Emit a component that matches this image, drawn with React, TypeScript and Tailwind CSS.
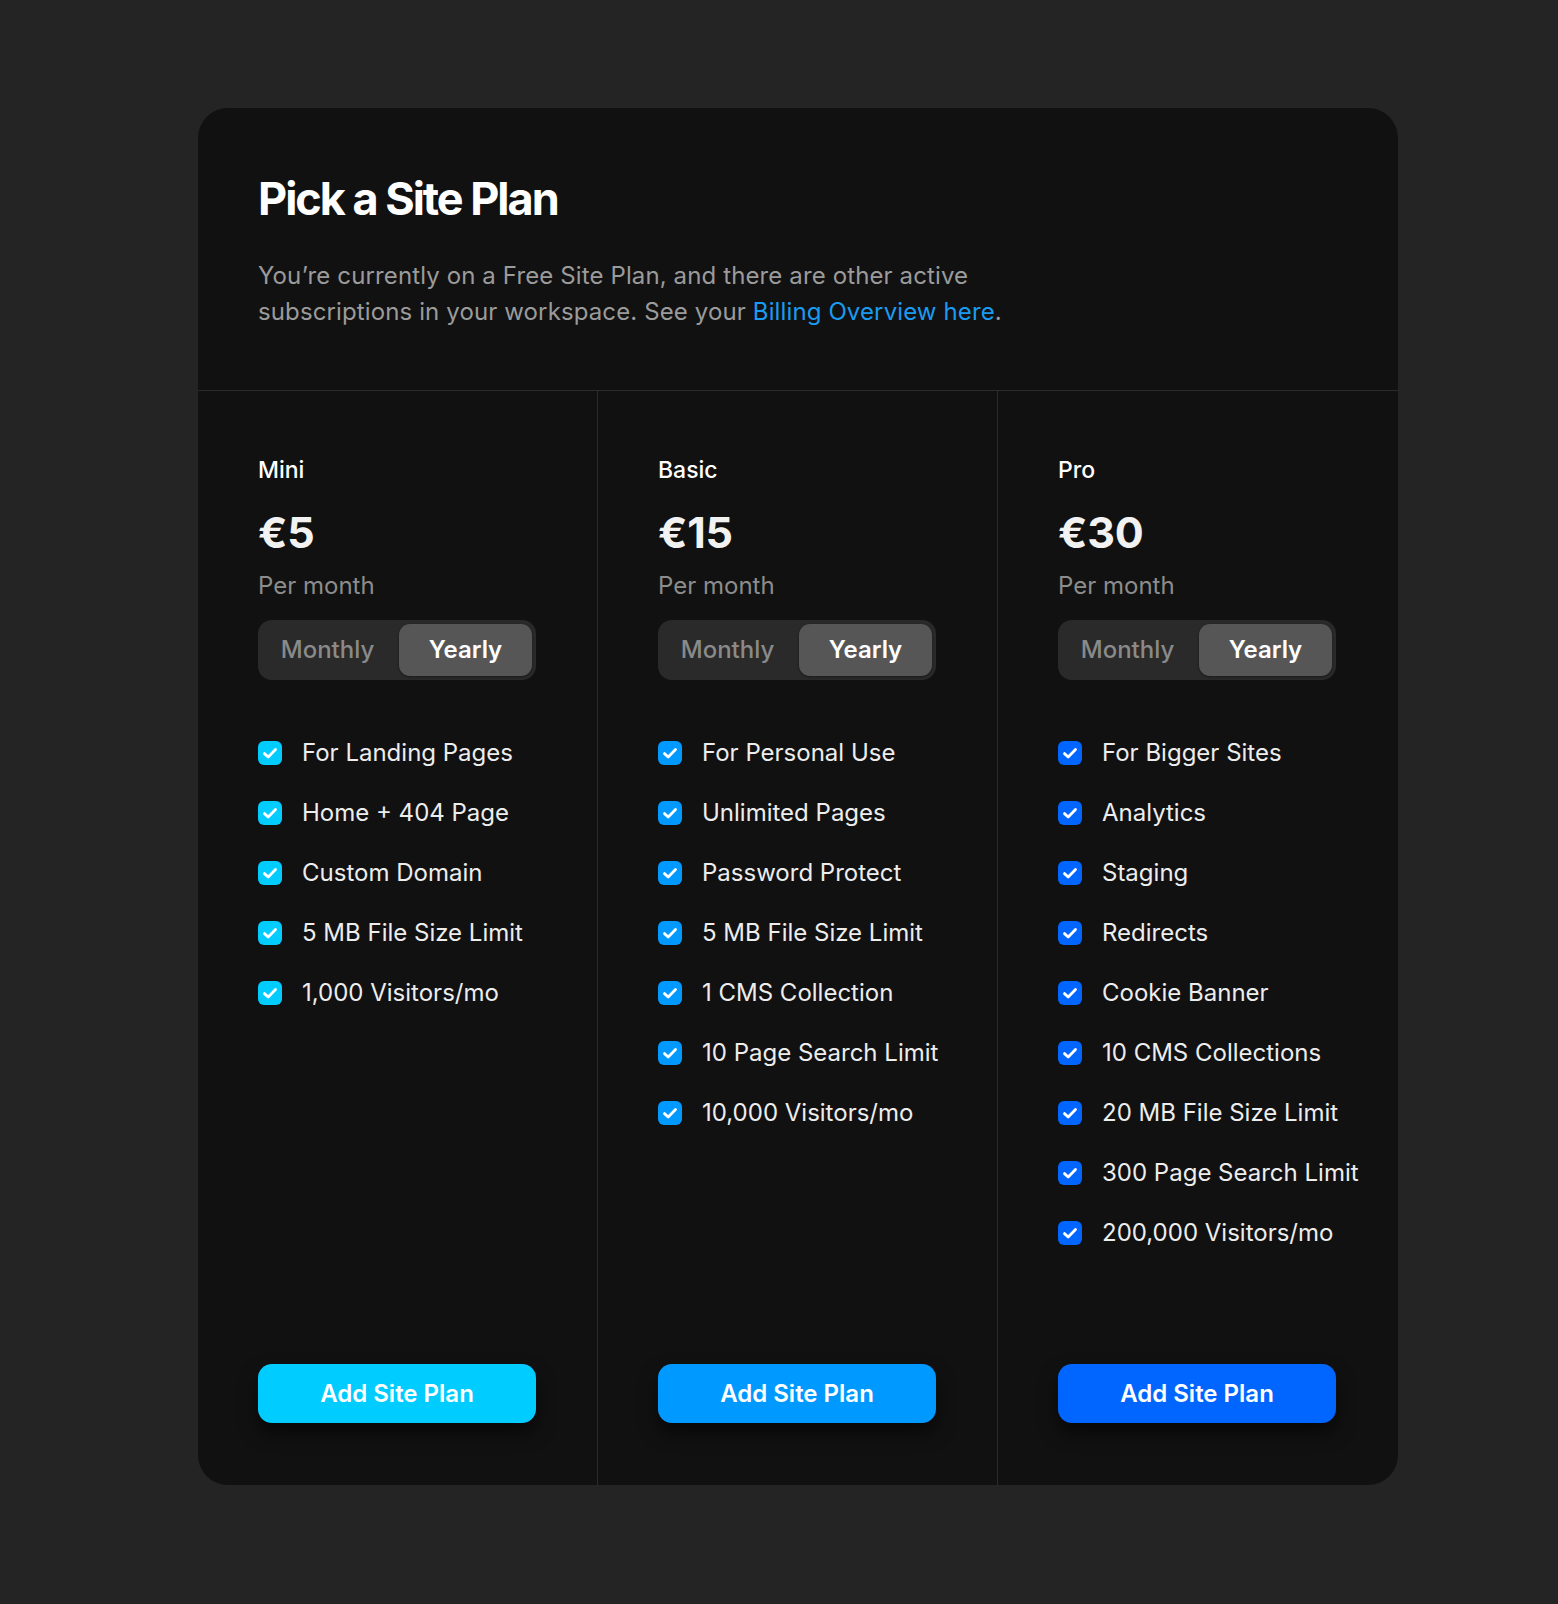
import React from "react";

type Plan = {
  name: string;
  price: string;
  color: string;
  features: string[];
};

const plans: Plan[] = [
  {
    name: "Mini",
    price: "€5",
    color: "cyan",
    features: [
      "For Landing Pages",
      "Home + 404 Page",
      "Custom Domain",
      "5 MB File Size Limit",
      "1,000 Visitors/mo",
    ],
  },
  {
    name: "Basic",
    price: "€15",
    color: "sky",
    features: [
      "For Personal Use",
      "Unlimited Pages",
      "Password Protect",
      "5 MB File Size Limit",
      "1 CMS Collection",
      "10 Page Search Limit",
      "10,000 Visitors/mo",
    ],
  },
  {
    name: "Pro",
    price: "€30",
    color: "blue",
    features: [
      "For Bigger Sites",
      "Analytics",
      "Staging",
      "Redirects",
      "Cookie Banner",
      "10 CMS Collections",
      "20 MB File Size Limit",
      "300 Page Search Limit",
      "200,000 Visitors/mo",
    ],
  },
];

function CheckBox({ color }: { color: string }) {
  const bg =
    color === "cyan"
      ? "bg-[#00ccff]"
      : color === "sky"
      ? "bg-[#0099ff]"
      : "bg-[#0066ff]";
  return (
    <span className={`flex h-6 w-6 shrink-0 items-center justify-center rounded-[6px] ${bg}`}>
      <svg width="24" height="24" viewBox="0 0 24 24" fill="none">
        <path
          d="M6.5 12.6 L10.2 16 L17.5 8.6"
          stroke="white"
          strokeWidth="2.8"
          strokeLinecap="round"
          strokeLinejoin="round"
        />
      </svg>
    </span>
  );
}

function PlanColumn({ plan }: { plan: Plan }) {
  const btn =
    plan.color === "cyan"
      ? "bg-[#00ccff]"
      : plan.color === "sky"
      ? "bg-[#0099ff]"
      : "bg-[#0066ff]";
  return (
    <div className="flex flex-col px-[60px] pt-[65px] pb-[62px]">
      <div className="text-[23px] leading-[28px] font-medium text-white">{plan.name}</div>
      <div className="mt-[23px] text-[43px] leading-[50px] font-bold text-[#f2f2f2] tracking-[-0.005em]">
        {plan.price}
      </div>
      <div className="mt-[15px] text-[24px] leading-[28px] text-[#8c8c8c]">Per month</div>
      <div className="mt-[20px] flex h-[60px] w-[278px] items-center rounded-[14px] bg-[#2a2a2a] p-1">
        <div className="flex h-[52px] flex-1 items-center justify-center pr-[6px] text-[24px] font-medium text-[#8a8a8a]">
          Monthly
        </div>
        <div className="flex h-[52px] w-[133px] items-center justify-center rounded-[11px] bg-[#565656] text-[24px] font-semibold text-white shadow-[0_1px_3px_rgba(0,0,0,0.4)]">
          Yearly
        </div>
      </div>
      <ul className="mt-[59px] flex flex-col gap-[32px]">
        {plan.features.map((f) => (
          <li key={f} className="flex h-[28px] items-center gap-[20px]">
            <CheckBox color={plan.color} />
            <span className="text-[24px] leading-[28px] text-[#ededed] whitespace-nowrap">{f}</span>
          </li>
        ))}
      </ul>
      <div className="mt-auto pt-[117px]">
        <button
          className={`flex h-[59px] w-[278px] items-center justify-center rounded-[14px] ${btn} text-[24px] font-semibold text-white shadow-[0_10px_18px_rgba(0,0,0,0.55)]`}
        >
          Add Site Plan
        </button>
      </div>
    </div>
  );
}

export default function App() {
  return (
    <div
      className="min-h-[1604px] w-full bg-[#242424] pt-[108px]"
      style={{ fontFamily: "Inter, 'Noto Sans', sans-serif" }}
    >
      <div className="ml-[198px] w-[1200px] overflow-hidden rounded-[30px] bg-[#111111]">
        <div className="border-b border-[#2b2b2b] px-[60px] pt-[63px] pb-[60px]">
          <h1 className="text-[45px] leading-[56px] font-bold tracking-[-0.045em] text-white">
            Pick a Site Plan
          </h1>
          <p className="mt-[31px] w-[780px] text-[24px] leading-[36px] tracking-[0.005em] text-[#9b9b9b]">
            You’re currently on a Free Site Plan, and there are other active
            <br />
            subscriptions in your workspace. See your{" "}
            <span className="text-[#1a9bf2]">Billing Overview here</span>.
          </p>
        </div>
        <div className="grid grid-cols-3 divide-x divide-[#2b2b2b]">
          {plans.map((p) => (
            <PlanColumn key={p.name} plan={p} />
          ))}
        </div>
      </div>
    </div>
  );
}
